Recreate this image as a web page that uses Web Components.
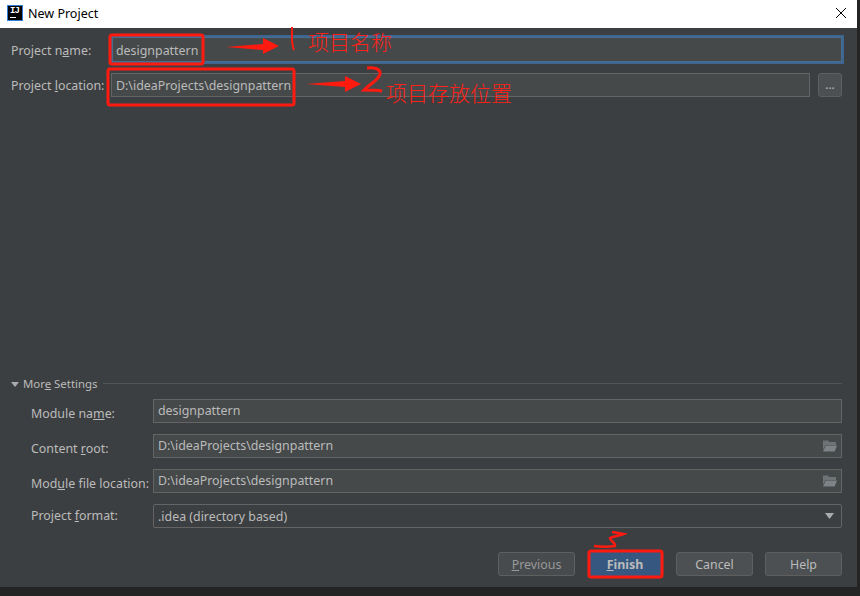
<!DOCTYPE html>
<html>
<head>
<meta charset="utf-8">
<title>New Project</title>
<style>
html,body{margin:0;padding:0;background:#242424;}
body{width:860px;height:596px;overflow:hidden;font-family:"Noto Sans","Liberation Sans",sans-serif;}
u{text-decoration:underline;text-underline-offset:2px;}
</style>
</head>
<body>
<project-dialog>
    <project-field slot="top" label="Project n<u>a</u>me:" value="designpattern" focused></project-field>
    <project-field slot="top" label="Project <u>l</u>ocation:" value="D:\ideaProjects\designpattern" browse></project-field>

    <settings-group slot="more" title-html="Mor<u>e</u> Settings">
        <project-field label="Module na<u>m</u>e:" value="designpattern" inner></project-field>
        <project-field label="Content <u>r</u>oot:" value="D:\ideaProjects\designpattern" inner folder></project-field>
        <project-field label="Mod<u>u</u>le file location:" value="D:\ideaProjects\designpattern" inner folder></project-field>
        <project-field label="Project <u>f</u>ormat:" value=".idea (directory based)" inner combo></project-field>
    </settings-group>

    <dialog-button slot="buttons" label="<u>P</u>revious" disabled></dialog-button>
    <dialog-button slot="buttons" label="<u>F</u>inish" primary></dialog-button>
    <dialog-button slot="buttons" label="Cancel"></dialog-button>
    <dialog-button slot="buttons" label="Help"></dialog-button>
</project-dialog>
<red-marks></red-marks>

<script>
class ProjectDialog extends HTMLElement{
    constructor(){
        super();
        this._shadowRoot = this.attachShadow({mode: "open"})
        this._shadowRoot.innerHTML = /*html*/`
            <style>
                :host{
                    display: flex;
                    flex-direction: column;
                    width: 857px;
                    height: 587px;
                    background: #3c3f41;
                    color: #bbbbbb;
                    font-size: 12.4px;
                }
                .title{
                    display: flex;
                    align-items: center;
                    height: 28px;
                    background: #ffffff;
                    color: #000000;
                    font-size: 12.5px;
                    flex: none;
                }
                .logo{
                    margin: 0 0 2px 7px;
                    width: 16px;
                    height: 16px;
                    box-sizing: border-box;
                    background: #000000;
                    border: 1px solid #2f7fd8;
                    color: #ffffff;
                    font: bold 9px "Liberation Mono", monospace;
                    letter-spacing: -1px;
                    line-height: 10px;
                    padding-left: 2px;
                    position: relative;
                    flex: none;
                }
                .logo i{
                    position: absolute;
                    left: 2px;
                    bottom: 2px;
                    width: 6px;
                    height: 1px;
                    background: #ffffff;
                }
                .name{
                    margin: 0 0 2px 5px;
                    flex: 1;
                }
                .close{
                    width: 12px;
                    height: 12px;
                    margin: 0 10px 2px 0;
                    flex: none;
                }
                .top{
                    display: flex;
                    flex-direction: column;
                    gap: 11px;
                    padding: 9px 15px 0 11px;
                }
                .more{
                    margin-top: auto;
                    padding: 0 15px 0 11px;
                }
                .buttons{
                    display: flex;
                    justify-content: flex-end;
                    gap: 12px;
                    padding: 24px 15px 11px 0;
                }
            </style>
            <div class="title">
                <div class="logo">IJ<i></i></div>
                <div class="name">New Project</div>
                <svg class="close" viewBox="0 0 12 12"><path d="M1 1L11 11M11 1L1 11" stroke="#000" stroke-width="1" fill="none"/></svg>
            </div>
            <div class="top"><slot name="top"></slot></div>
            <div class="more"><slot name="more"></slot></div>
            <div class="buttons"><slot name="buttons"></slot></div>
        `
    }
}
customElements.define("project-dialog", ProjectDialog)

class ProjectField extends HTMLElement{
    constructor(){
        super();
        this._shadowRoot = this.attachShadow({mode: "open"})
    }
    connectedCallback(){
        let extra = "";
        if(this.hasAttribute("folder")){
            extra = `<svg class="ico" width="15" height="12" viewBox="0 0 15 12"><path d="M1 0.5H6L7.5 2H14V5H3.5L1 10Z" fill="#6e7376"/><path d="M3.8 5.5H15L12.7 11.5H1Z" fill="#7d8386"/></svg>`
        }
        if(this.hasAttribute("combo")){
            extra = `<svg class="ico" width="9" height="6" viewBox="0 0 9 6"><path d="M0 0H9L4.5 6Z" fill="#a9abad"/></svg>`
        }
        let browse = this.hasAttribute("browse") ? `<div class="browse">...</div>` : "";
        this._shadowRoot.innerHTML = /*html*/`
            <style>
                :host{
                    display: flex;
                    align-items: center;
                    height: 24px;
                }
                :host([focused]){
                    height: 25px;
                }
                .label{
                    width: 100px;
                    flex: none;
                    white-space: nowrap;
                }
                :host([focused]) .label{
                    position: relative;
                    top: 1px;
                }
                :host([inner]) .label{
                    width: 122px;
                    position: relative;
                    top: 2px;
                }
                :host([combo]) .label{
                    top: -1px;
                }
                .input{
                    flex: 1;
                    height: 24px;
                    box-sizing: border-box;
                    display: flex;
                    align-items: center;
                    justify-content: space-between;
                    background: #45494a;
                    border: 1px solid #646464;
                    padding: 0 5px 0 4px;
                    white-space: nowrap;
                }
                :host([inner]:not([combo])) .input span{
                    position: relative;
                    top: -1px;
                }
                :host([focused]) .input{
                    height: 25px;
                    border-color: #466d94;
                    box-shadow: 0 0 0 2px #3f6591;
                    margin-left: 1px;
                    padding-left: 3px;
                }
                :host([focused]) .input span{
                    position: relative;
                    top: 1px;
                }
                :host([combo]) .input{
                    border-radius: 2px;
                    padding-right: 7px;
                    background: #3c3f41;
                }
                :host([folder]) .input{
                    padding-right: 4px;
                }
                .browse{
                    width: 24px;
                    height: 24px;
                    box-sizing: border-box;
                    margin-left: 8px;
                    flex: none;
                    background: #4c5052;
                    border: 1px solid #5e6060;
                    border-radius: 3px;
                    text-align: center;
                    line-height: 21px;
                    font-size: 12px;
                }
                .ico{
                    flex: none;
                }
            </style>
            <div class="label">${this.getAttribute("label")}</div>
            <div class="input"><span>${this.getAttribute("value")}</span>${extra}</div>
            ${browse}
        `
    }
}
customElements.define("project-field", ProjectField)

class SettingsGroup extends HTMLElement{
    constructor(){
        super();
        this._shadowRoot = this.attachShadow({mode: "open"})
    }
    connectedCallback(){
        this._shadowRoot.innerHTML = /*html*/`
            <style>
                :host{
                    display: block;
                }
                .head{
                    display: flex;
                    align-items: center;
                    height: 18px;
                    font-size: 11.4px;
                }
                .arrow{
                    flex: none;
                    margin-right: 4px;
                }
                .head span{
                    white-space: nowrap;
                    position: relative;
                    top: -1px;
                }
                .line{
                    flex: 1;
                    height: 1px;
                    background: #515456;
                    margin: 0 0 2px 6px;
                }
                .rows{
                    display: flex;
                    flex-direction: column;
                    gap: 11px;
                    padding: 6px 0 0 20px;
                }
            </style>
            <div class="head">
                <svg class="arrow" width="8" height="5" viewBox="0 0 8 5"><path d="M0 0H8L4 5Z" fill="#a9abad"/></svg>
                <span>${this.getAttribute("title-html")}</span>
                <div class="line"></div>
            </div>
            <div class="rows"><slot></slot></div>
        `
    }
}
customElements.define("settings-group", SettingsGroup)

class DialogButton extends HTMLElement{
    constructor(){
        super();
        this._shadowRoot = this.attachShadow({mode: "open"})
    }
    connectedCallback(){
        this._shadowRoot.innerHTML = /*html*/`
            <style>
                :host{
                    display: flex;
                    align-items: center;
                    justify-content: center;
                    width: 77px;
                    height: 24px;
                    box-sizing: border-box;
                    background: #4c5052;
                    border: 1px solid #5e6060;
                    border-radius: 3px;
                }
                :host([disabled]){
                    background: #474b4d;
                    color: #999999;
                }
                :host([primary]){
                    background: #365880;
                    border-color: #365880;
                    font-weight: bold;
                    width: 72px;
                    margin: 0 3px 0 2px;
                }
            </style>
            <span>${this.getAttribute("label")}</span>
        `
    }
}
customElements.define("dialog-button", DialogButton)

// red hand drawn notes that lie over the dialog
class RedMarks extends HTMLElement{
    constructor(){
        super();
        this._shadowRoot = this.attachShadow({mode: "open"})
        this._shadowRoot.innerHTML = /*html*/`
            <style>
                :host{
                    position: absolute;
                    left: 0;
                    top: 0;
                    width: 860px;
                    height: 596px;
                    pointer-events: none;
                }
                svg{
                    position: absolute;
                    left: 0;
                    top: 0;
                }
                .note{
                    position: absolute;
                    color: #ff2218;
                    font: 300 21px/24px "Noto Sans CJK SC", sans-serif;
                    white-space: nowrap;
                }
            </style>
            <svg width="860" height="596" fill="none" stroke="#ff1a10" stroke-width="3">
                <rect x="110" y="35" width="93" height="29" rx="2"/>
                <rect x="108" y="69" width="186" height="36" rx="2"/>
                <rect x="589" y="551" width="73" height="26" rx="2"/>
                <path d="M226 47L263 44V38L279 46L263 54V50Z" fill="#ff1a10" stroke="none"/>
                <path d="M306 84L345 81V76L361 84L345 92V87Z" fill="#ff1a10" stroke="none"/>
                <path d="M292 27C292 36 291 43 294 50" stroke-width="2"/>
                <path d="M367 68C374 67 381 69 380 74C379 80 370 84 364 90C370 90 376 90 382 91"/>
                <path d="M594 546C602 547 610 547 615 546C616 543 610 541 610 538C614 536 620 536 624 534L612 532" stroke-width="2.5"/>
            </svg>
            <div class="note" style="left:308px;top:29px">项目名称</div>
            <div class="note" style="left:386px;top:80px">项目存放位置</div>
        `
    }
}
customElements.define("red-marks", RedMarks)
</script>
</body>
</html>
